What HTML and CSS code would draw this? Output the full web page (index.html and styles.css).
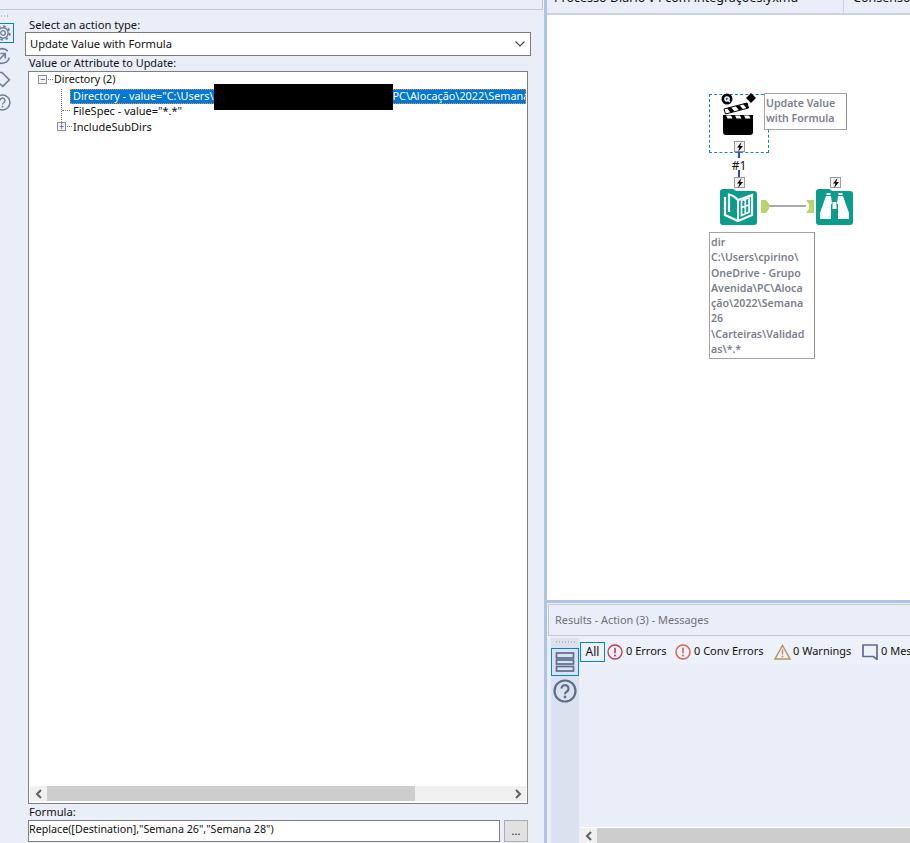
FILE: index.html
```html
<!DOCTYPE html>
<html lang="pt">
<head>
<meta charset="utf-8">
<title>Action configuration</title>
<link rel="stylesheet" href="styles.css">
</head>
<body>
<div class="app">
  <section class="props">
    <div class="props-head"></div>
    <div class="props-body">
      <nav class="strip">
        <div class="dots"></div>
        <div class="strip-btn active">
          <svg width="16" height="16" viewBox="0 0 16 16"><g fill="none" stroke="#6f7f9b"><circle cx="8" cy="8" r="5.200" stroke-width="1.400"/><circle cx="8" cy="8" r="6.800" stroke-width="1.800" stroke-dasharray="2.600 2.740"/><circle cx="8" cy="8" r="2.300" stroke-width="1.300"/></g></svg>
        </div>
        <div class="strip-btn">
          <svg width="18" height="18" viewBox="0 0 22 22"><g fill="none" stroke="#6f7f9b" stroke-width="2"><path d="M2 9a9.500 9.500 0 0 1 16-4"/><path d="M20 13a9.500 9.500 0 0 1-16 4"/><path d="M9 8h6v6M15 8l-7 7"/></g></svg>
        </div>
        <div class="strip-btn">
          <svg width="18" height="18" viewBox="0 0 22 22"><path d="M1 3h10l9 9-8 8L1 11z" fill="none" stroke="#6f7f9b" stroke-width="2"/><circle cx="6" cy="7.500" r="1.500" fill="#6f7f9b"/></svg>
        </div>
        <div class="strip-btn">
          <svg width="17" height="17" viewBox="0 0 20 20"><circle cx="10" cy="10" r="8.700" fill="none" stroke="#6f7f9b" stroke-width="1.800"/><path d="M7.300 7.600a2.800 2.800 0 1 1 4.300 2.400c-1 .6-1.600 1.100-1.600 2.300" fill="none" stroke="#6f7f9b" stroke-width="1.700"/><circle cx="10" cy="14.800" r="1.100" fill="#6f7f9b"/></svg>
        </div>
      </nav>
      <form class="form">
        <div class="field-label">Select an action type:</div>
        <div class="select">
          <span>Update Value with Formula</span>
          <svg width="10" height="6" viewBox="0 0 10 6"><path d="M.5.5 5 5 9.500.5" fill="none" stroke="#444" stroke-width="1.100"/></svg>
        </div>
        <div class="field-label second">Value or Attribute to Update:</div>
        <div class="tree">
          <div class="tree-body">
            <div class="row row-root"><span class="toggle">&#8722;</span><span class="dash"></span><span class="root-text">Directory (2)</span></div>
            <div class="row row-child selected"><span class="sel-text">Directory - value="C:\Users\<span class="gap"></span>PC\Alocação\2022\Semana 26\Carteiras\Validadas"</span></div>
            <div class="row row-child"><span class="dash-left"></span><span>FileSpec - value="*.*"</span></div>
            <div class="row row-child plus"><span class="toggle">+</span><span class="dash short"></span><span>IncludeSubDirs</span></div>
            <div class="vline"></div>
            <div class="redact"></div>
          </div>
          <div class="hscroll">
            <span class="sb-btn"><svg width="8" height="10" viewBox="0 0 8 10"><path d="M6 1 2 5l4 4" fill="none" stroke="#606060" stroke-width="2"/></svg></span>
            <span class="sb-thumb"></span>
            <span class="sb-rest"></span>
            <span class="sb-btn"><svg width="8" height="10" viewBox="0 0 8 10"><path d="m2 1 4 4-4 4" fill="none" stroke="#606060" stroke-width="2"/></svg></span>
          </div>
        </div>
        <div class="field-label third">Formula:</div>
        <div class="formula-row">
          <div class="formula">Replace([Destination],"Semana 26","Semana 28")</div>
          <div class="dots-btn">...</div>
        </div>
      </form>
    </div>
  </section>

  <div class="vsplit"></div>

  <section class="main">
    <div class="tabs">
      <div class="tab tab-first"><span>Processo Diário v4 com integrações.yxmd</span></div>
      <div class="tab tab-second"><span>Consenso Gestores.yxmd</span></div>
    </div>

    <div class="canvas">
      <div class="selection"></div>
      <svg class="clapper" width="34" height="42" viewBox="0 0 34 42">
        <path d="M28 0l5 5-5 5-5-5z"/>
        <path d="M1 16 24 10l1.500 5L2.500 21z" fill="#fff" stroke="#000" stroke-width="1"/>
        <path d="M4 15.200l3.500 4.300 4-1.100-3.500-4.300zM12.500 13l3.500 4.300 4-1.100-3.500-4.300zM20 11l3.500 4.300 2-.5-1.500-5z"/>
        <path d="M0 22h30v17a3 3 0 0 1-3 3H3a3 3 0 0 1-3-3z"/>
        <path d="M3 22.500h5l1.500 3h-5zM12 22.500h5l1.500 3h-5zM21 22.500h5l1.500 3h-5z" fill="#fff"/>
      </svg>
      <svg class="badge-q" width="12" height="12" viewBox="0 0 12 12"><circle cx="6" cy="6" r="5.500"/><circle cx="6" cy="6" r="2.800" fill="#fff"/><circle cx="6" cy="6" r="1.300" fill="#2b5fa8"/><path d="m6.500 6.500 2.500 2.500" stroke="#fff" stroke-width="1.300"/></svg>
      <div class="note note-title">Update Value with Formula</div>
      <span class="bolt bolt-a"><svg width="8" height="10" viewBox="0 0 8 10"><path d="M5.500 0 1 5.500h2.500L2 10l5-6H4.200z"/></svg></span>
      <div class="wire wire-a"></div>
      <div class="hash">#1</div>
      <div class="wire wire-b"></div>
      <span class="bolt bolt-b"><svg width="8" height="10" viewBox="0 0 8 10"><path d="M5.500 0 1 5.500h2.500L2 10l5-6H4.200z"/></svg></span>
      <span class="bolt bolt-c"><svg width="8" height="10" viewBox="0 0 8 10"><path d="M5.500 0 1 5.500h2.500L2 10l5-6H4.200z"/></svg></span>
      <svg class="tool tool-dir" width="37" height="36" viewBox="0 0 37 36">
        <path d="M3 0h10l3 2h18a3 3 0 0 1 3 3v28a3 3 0 0 1-3 3H3a3 3 0 0 1-3-3V3a3 3 0 0 1 3-3z" fill="#0b9c8b"/>
        <path d="M5 8v18l13 6 14-6V6l-14 5C15 8 12 6 9 5.500V23" fill="none" stroke="#fff" stroke-width="2.200"/>
        <path d="M18 11v21" stroke="#fff" stroke-width="2"/>
        <path d="M21.500 11.500l7.500-2.700v14.400l-7.500 3.300zM21.500 18.500l7.500-2.500M25.300 10.300v14.500" fill="none" stroke="#fff" stroke-width="1.700"/>
      </svg>
      <svg class="anchor anchor-out" width="8" height="13" viewBox="0 0 8 13"><path d="M0 0h5l3 4v5l-3 4H0z" fill="#b7d56b"/></svg>
      <div class="link"></div>
      <svg class="anchor anchor-in" width="8" height="13" viewBox="0 0 8 13"><path d="M0 0h8v13H0l3-4V4z" fill="#b7d56b"/></svg>
      <svg class="tool tool-browse" width="37" height="36" viewBox="0 0 37 36">
        <path d="M3 0h10l3 2h18a3 3 0 0 1 3 3v28a3 3 0 0 1-3 3H3a3 3 0 0 1-3-3V3a3 3 0 0 1 3-3z" fill="#0b9c8b"/>
        <path d="M10 7h5l1 8h-1v15H4v-6zM27 7h-5l-1 8h1v15h11v-6z" fill="#fff"/>
        <path d="M16.500 13h4v7h-4z" fill="#fff"/>
        <path d="M14.500 4h-4v2h4zM26.500 4h-4v2h4z" fill="#fff"/>
      </svg>
      <div class="note note-dir">dir C:\Users\cpirino\<br>OneDrive - Grupo Avenida\PC\Aloca<br>ção\2022\Semana<br>26<br>\Carteiras\Validad<br>as\*.*</div>
    </div>

    <div class="hsplit"></div>

    <div class="results">
      <div class="results-head">Results - Action (3) - Messages</div>
      <div class="results-body">
        <nav class="rstrip">
          <div class="dots rdots"></div>
          <div class="rstrip-btn active">
            <svg width="20" height="20" viewBox="0 0 20 20"><g fill="none" stroke="#5d6d8c" stroke-width="1.700"><rect x="1.500" y="1" width="17" height="5"/><rect x="1.500" y="8" width="17" height="4"/><rect x="1.500" y="14.500" width="17" height="4.500"/></g></svg>
          </div>
          <div class="rstrip-btn">
            <svg width="24" height="24" viewBox="0 0 24 24"><circle cx="12" cy="12" r="10.500" fill="none" stroke="#5d6d8c" stroke-width="2.200"/><path d="M8.500 9.500a3.500 3.500 0 1 1 5.400 3c-1.200.7-1.900 1.300-1.900 2.700" fill="none" stroke="#5d6d8c" stroke-width="2.200"/><circle cx="12" cy="18" r="1.400" fill="#5d6d8c"/></svg>
          </div>
        </nav>
        <div class="rcontent">
          <div class="filters">
            <span class="filter-all">All</span>
            <span class="filter f-err"><svg width="16" height="16" viewBox="0 0 16 16"><circle cx="8" cy="8" r="7" fill="none" stroke="#c03a4b" stroke-width="1.300"/><path d="M8 3.800v5.400" stroke="#c03a4b" stroke-width="1.600"/><circle cx="8" cy="11.500" r="1" fill="#c03a4b"/></svg>0 Errors</span>
            <span class="filter f-conv"><svg width="16" height="16" viewBox="0 0 16 16"><circle cx="8" cy="8" r="7" fill="none" stroke="#d9654f" stroke-width="1.500"/><path d="M8 3.800v5.400" stroke="#d9654f" stroke-width="1.600"/><circle cx="8" cy="11.500" r="1" fill="#d9654f"/></svg>0 Conv Errors</span>
            <span class="filter f-warn"><svg width="17" height="16" viewBox="0 0 17 16"><path d="M8.500 1.500 16 15H1z" fill="none" stroke="#b98f60" stroke-width="1.400"/><path d="M8.500 5.500v5" stroke="#b98f60" stroke-width="1.400"/><circle cx="8.500" cy="12.500" r=".9" fill="#b98f60"/></svg>0 Warnings</span>
            <span class="filter f-msg"><svg width="16" height="16" viewBox="0 0 16 16"><path d="M1 1h14v10.500l0 4-3.500-3H1z" fill="none" stroke="#5d6d8c" stroke-width="1.700"/></svg>0 Messages</span>
          </div>
          <div class="rspace"></div>
          <div class="rscroll">
            <span class="sb-btn"><svg width="8" height="10" viewBox="0 0 8 10"><path d="M6 1 2 5l4 4" fill="none" stroke="#606060" stroke-width="2"/></svg></span>
            <span class="sb-thumb wide"></span>
          </div>
        </div>
      </div>
    </div>
  </section>
</div>
</body>
</html>
```
FILE: styles.css
```css
* { box-sizing: border-box; }
html, body { margin: 0; padding: 0; }
body { width: 910px; height: 843px; overflow: hidden; background: #e9eef9; font-family: "Noto Sans", "Open Sans", sans-serif; font-size: 11px; color: #111; }
.app { display: flex; width: 910px; height: 843px; overflow: hidden; }

/* left properties panel */
.props { width: 544px; flex: none; display: flex; flex-direction: column; }
.props-head { height: 10px; margin-right: 1px; border-bottom: 1px solid #c9c9c9; border-right: 1px solid #c9c9c9; }
.props-body { flex: 1; display: flex; min-height: 0; }
.strip { width: 14px; flex: none; overflow: hidden; padding-top: 5px; }
.dots { height: 2px; margin: 0 0 6px; width: 8px; background-image: radial-gradient(circle, #b4bccb 1px, transparent 1px); background-size: 3px 2px; }
.strip-btn { width: 14px; height: 20px; margin-bottom: 3px; display: flex; align-items: center; justify-content: flex-end; overflow: hidden; }
.strip-btn svg { flex: none; margin-right: 3px; }
.strip-btn.active { border: 1px solid #0a7fd6; border-left: 0; }
.strip-btn.active svg { margin-right: 2px; }

.form { width: 530px; flex: none; padding: 9px 0 0 11px; }
.field-label { height: 13px; padding-left: 4px; line-height: 11px; font-size: 11.200px; }
.field-label.second { height: 15px; line-height: 14px; font-size: 10.900px; }
.field-label.third { height: 16px; line-height: 16px; }
.select { width: 506px; height: 24px; border: 1px solid #7a7a7a; background: #fff; display: flex; align-items: center; justify-content: space-between; padding: 0 4px 2px; font-size: 11.150px; }
.select svg { margin: 2px 1px 0 0; }
.tree { width: 500px; height: 733px; margin-left: 3px; border: 1px solid #7d8085; background: #fff; display: flex; flex-direction: column; }
.tree-body { position: relative; flex: 1; min-height: 0; }
.row { height: 16px; padding-bottom: 2px; display: flex; align-items: center; white-space: nowrap; }
.row-root { padding-left: 9px; }
.row-root .root-text { font-size: 10.700px; }
.row-root .dash { width: 5px; }
.row-child { padding-left: 44px; }
.row-child.plus { padding-left: 28px; }
.toggle { width: 9px; height: 9px; border: 1px solid #8b929e; background: #f4f4f4; display: flex; align-items: center; justify-content: center; font-size: 9px; line-height: 1; color: #1c3f94; }
.dash { width: 6px; margin: 0 1px 0 1px; border-top: 1px dotted #777; }
.dash.short { width: 5px; }
.dash-left { position: absolute; left: 33px; width: 8px; border-top: 1px dotted #777; }
.row-child.selected { width: 456px; margin-left: 41px; padding-left: 3px; margin-top: 1px; margin-bottom: -1px; height: 15px; background: #0078d7; color: #fff; outline: 1px dotted #e8912b; outline-offset: -1px; overflow: hidden; position: relative; font-size: 10.850px; }
.sel-text { white-space: nowrap; }
.gap { display: inline-block; width: 179px; }
.vline { position: absolute; left: 32px; top: 17px; height: 35px; border-left: 1px dotted #777; }
.redact { position: absolute; left: 185px; top: 12px; width: 179px; height: 26px; background: #000; }
.hscroll { height: 15px; margin: 0 1px 2px; display: flex; background: #f0f0f0; flex: none; }
.sb-btn { width: 17px; flex: none; display: flex; align-items: center; justify-content: center; background: #f0f0f0; }
.sb-thumb { width: 368px; flex: none; background: #cdcdcd; }
.sb-rest { flex: 1; }
.formula-row { display: flex; gap: 4px; margin-left: 3px; }
.formula { width: 472px; height: 22px; border: 1px solid #7d8085; background: #fff; padding: 0; line-height: 17px; white-space: nowrap; font-size: 10.700px; }
.dots-btn { width: 24px; height: 22px; border: 1px solid #adadad; background: #e1e1e1; text-align: center; line-height: 19px; }

/* splitters */
.vsplit { width: 3px; flex: none; background: #b1c3e2; }
.main { flex: 1; min-width: 0; display: flex; flex-direction: column; }
.hsplit { height: 3px; flex: none; background: #b1c3e2; }

/* tabs */
.tabs { height: 15px; flex: none; display: flex; overflow: hidden; border-bottom: 2px solid #c8d3e9; font-size: 12.500px; }
.tab { height: 13px; overflow: hidden; line-height: 14px; white-space: nowrap; padding-left: 7px; }
.tab span { display: block; margin-top: -9px; }
.tab-first { width: 297px; flex: none; border-right: 1px solid #c8d3e9; }
.tab-second { padding-left: 9px; }

/* canvas */
.canvas { position: relative; height: 585px; flex: none; background: #fff; }
.selection { position: absolute; left: 162px; top: 79px; width: 60px; height: 59px; border: 1px dashed #1380df; }
.badge-q { position: absolute; left: 174px; top: 78px; }
.clapper { position: absolute; left: 176px; top: 78px; }
.note { position: absolute; background: #fff; border: 1px solid #a3a3a3; border-right-color: #8f8f8f; color: #7c7f8c; font-weight: 600; font-size: 10.600px; }
.note-title { left: 217px; top: 78px; width: 83px; height: 37px; padding: 2px 1px 0; line-height: 15px; }
.note-dir { left: 162px; top: 217px; width: 106px; height: 127px; padding: 2px 1px 0; line-height: 15.300px; word-break: break-word; }
.bolt { position: absolute; width: 11px; height: 11px; border: 1px solid #9a9a9a; background: #f2f2f2; display: flex; align-items: center; justify-content: center; }
.bolt svg { flex: none; }
.bolt-a { left: 187px; top: 126px; }
.bolt-b { left: 187px; top: 162px; }
.bolt-c { left: 283px; top: 162px; }
.wire { position: absolute; left: 191px; width: 2px; background: #3244d8; }
.wire-a { top: 137px; height: 6px; }
.wire-b { top: 155px; height: 7px; }
.hash { position: absolute; left: 182px; top: 143px; width: 20px; text-align: center; font-size: 12px; line-height: 16px; color: #111; }
.tool { position: absolute; top: 174px; }
.tool-dir { left: 173px; }
.tool-browse { left: 269px; }
.anchor { position: absolute; top: 185px; }
.anchor-out { left: 214px; }
.anchor-in { left: 259px; }
.link { position: absolute; left: 222px; top: 190px; width: 37px; height: 2px; background: #a9a9a9; }

/* results */
.results { flex: 1; min-height: 0; display: flex; flex-direction: column; }
.results-head { height: 32px; margin: 1px 0 0 1px; border: 1px solid #c9c9c9; border-right: 0; padding-left: 6px; line-height: 29px; color: #6f7078; flex: none; font-size: 10.900px; }
.results-body { flex: 1; display: flex; min-height: 0; padding: 2px 0 0 4px; }
.rstrip { width: 28px; flex: none; background: #dbe2ef; padding-top: 3px; }
.rdots { margin: 0 0 5px 4px; width: 20px; }
.rstrip-btn { height: 28px; display: flex; align-items: center; justify-content: center; }
.rstrip-btn + .rstrip-btn { margin-top: 1px; }
.rstrip-btn.active { border: 1px solid #0a7fd6; }
.rcontent { flex: 1; min-width: 0; display: flex; flex-direction: column; overflow: hidden; padding-left: 1px; }
.filters { height: 26px; padding-top: 4px; display: flex; align-items: flex-start; white-space: nowrap; font-size: 11px; background: #edf1fa; flex: none; }
.filter-all { width: 25px; height: 20px; flex: none; border: 1px solid #0a7fd6; text-align: center; line-height: 17px; font-size: 12px; }
.filter { display: inline-flex; align-items: flex-start; height: 16px; margin-top: 2px; gap: 3px; flex: none; line-height: 14px; }
.f-err { margin-left: 2px; width: 68px; }
.f-conv { width: 99px; }
.f-warn { width: 88px; gap: 2px; }
.rspace { flex: 1; }
.rscroll { height: 16px; flex: none; display: flex; background: #f0f0f0; border-top: 1px solid #fff; }
.sb-thumb.wide { flex: 1; width: auto; }
```
